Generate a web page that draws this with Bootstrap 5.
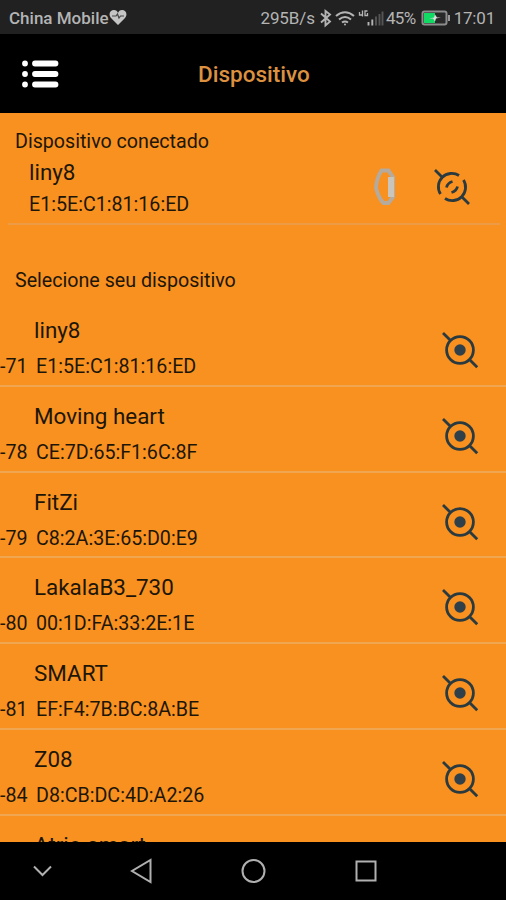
<!DOCTYPE html>
<html lang="pt">
<head>
<meta charset="utf-8">
<meta name="viewport" content="width=device-width, initial-scale=1">
<title>Dispositivo</title>
<link href="https://cdn.jsdelivr.net/npm/bootstrap@5.3.0/dist/css/bootstrap.min.css" rel="stylesheet">
<style>
body{font-family:Roboto,"Liberation Sans",sans-serif;background:#f8911f;color:#1d1608;width:506px;height:900px}
svg{display:block;flex:none}
.statusbar{height:34px;background:#212121;color:#b4b4b4;font-size:17px;line-height:34px;padding:1px 11px 0 9px}
.carrier{width:100px;font-weight:500}
.speed{letter-spacing:-.1px}
.percent{letter-spacing:-.6px}
.battery{margin:0 3px 0 5px}
.clock{letter-spacing:-.2px}
.appbar{height:79px;background:#000;color:#dc9140;padding-left:21px}
.appbar h1{font-size:22.5px;margin:2px 0 0 139px}
.sect,.addr,.rssi{font-size:19.65px;line-height:30px;white-space:nowrap}
.dev{font-size:22.4px;line-height:30px;white-space:nowrap}
.linked{height:112px;margin:0 6px 0 8px;padding:14px 0 0 7px;border-bottom:2px solid #ee9b45}
.linked .dev{margin:0 0 3px 14px}
.linked .addr{margin-left:14px}
.band{margin:41px 36px 0 0}
.unlink{margin:41px 29px 0 0}
.pick{height:76px;padding:41px 0 0 15px}
.found{height:85.75px;border-bottom:2px solid #f0a550;padding-top:14px}
.found .dev{padding-left:34px;margin-bottom:7px}
.rssi{width:36px}
.target{margin:16px 27px 0 0}
.navbtns{height:58px;background:#000}
</style>
</head>
<body class="d-flex flex-column overflow-hidden">
<svg class="d-none">
  <symbol id="aim" viewBox="0 0 38 38"><g fill="none" stroke="#2b3a3f" stroke-width="2.8"><circle cx="19" cy="19" r="13.400"/><path d="M2 2l7.800 7.800M28.200 28.200l8 8"/></g><circle cx="19" cy="19" r="5.700" fill="#2f404a"/></symbol>
</svg>
<header class="statusbar d-flex align-items-center flex-shrink-0">
  <span class="carrier">China Mobile</span>
  <svg width="18" height="17" viewBox="0 0 18 17"><path d="M9 16L2 9C-1 5 1 1 5 1q3 0 4 3 1-3 4-3c4 0 6 4 3 8z" fill="#c4c4c4"/><path d="M3 7h4l1.500-2L10 9l1.500-2H15" fill="none" stroke="#444" stroke-width="1.200"/></svg>
  <span class="ms-auto speed">295B/s</span>
  <svg width="71" height="24" viewBox="314 5.500 71 24" fill="none" stroke="#b4b4b4" stroke-width="1.900">
    <path d="M320 13l9 8-4.500 4V10.500l4.500 3.500-9 8"/>
    <path d="M335 15.500q9-7.500 18 0M338 19q6-5 12 0M341 22q3-2 6 0" stroke-width="2.100"/><circle cx="344" cy="24" r="1" fill="#b4b4b4" stroke="none"/>
    <path d="M358.500 11.500v3h3v-3M361.500 10v6M366.500 10.500h-2.500v4.500h2.500v-2.500" stroke-width="1.300"/>
    <path d="M367.500 21.500v3.500M371.300 19v6"/><path d="M375 16v9M378.500 13.500v11.500M381.500 11v14" stroke="#555"/>
  </svg>
  <span class="percent">45%</span>
  <svg class="battery" width="30" height="18" viewBox="0 0 30 18"><rect x="1.500" y="2.500" width="24" height="13" rx="2" fill="#292929" stroke="#8c8c8c" stroke-width="2"/><path d="M3 4h11v10H3z" fill="#12d963"/><path d="M8 9.500l5-1 1-3 2 3h4l-5 1-1 3-2-3z" fill="#ddd"/><path d="M28 6v6" stroke="#999" stroke-width="2"/></svg>
  <span class="clock">17:01</span>
</header>
<nav class="appbar d-flex align-items-center flex-shrink-0">
  <svg width="38" height="30" viewBox="0 0 38 30" fill="#fff" stroke="#fff" stroke-width="5.800" stroke-linecap="round"><path d="M4 4.500h.01M4 15h.01M4 25.500h.01M14 4.500h20.500M14 15h20.500M14 25.500h20.500"/></svg>
  <h1>Dispositivo</h1>
</nav>
<main class="flex-grow-1 overflow-hidden">
  <section class="linked d-flex">
    <div class="flex-grow-1"><div class="sect">Dispositivo conectado</div><div class="dev">liny8</div><div class="addr">E1:5E:C1:81:16:ED</div></div>
    <svg class="band" width="24" height="37" viewBox="0 0 24 37"><path d="M8.500 2.500h7l4.500 6.500v20l-4.500 6h-5Q6 31 3 20 3.500 10 8.500 2.500z" fill="none" stroke="#b5aa9b" stroke-width="4"/><path d="M15 9h6v20h-6z" fill="#c9c5bd"/></svg>
    <svg class="unlink" width="38" height="38" viewBox="0 0 38 38" fill="none" stroke="#2b3a3f" stroke-width="2.800"><path d="M2 2l7.500 7.500M28.500 28.500l7.500 7.500M7.500 26A13.400 13.400 0 0 1 26 7.500M30.500 12A13.400 13.400 0 0 1 12 30.500M13.500 19.500q1-4.500 6-6M18.500 24.500q5-1.500 6-6"/></svg>
  </section>
  <div class="pick sect">Selecione seu dispositivo</div>
  <div class="found d-flex"><div class="flex-grow-1"><div class="dev">liny8</div><div class="d-flex"><span class="rssi">-71</span><span class="addr">E1:5E:C1:81:16:ED</span></div></div><svg class="target" width="38" height="38"><use href="#aim"/></svg></div>
  <div class="found d-flex"><div class="flex-grow-1"><div class="dev">Moving heart</div><div class="d-flex"><span class="rssi">-78</span><span class="addr">CE:7D:65:F1:6C:8F</span></div></div><svg class="target" width="38" height="38"><use href="#aim"/></svg></div>
  <div class="found d-flex"><div class="flex-grow-1"><div class="dev">FitZi</div><div class="d-flex"><span class="rssi">-79</span><span class="addr">C8:2A:3E:65:D0:E9</span></div></div><svg class="target" width="38" height="38"><use href="#aim"/></svg></div>
  <div class="found d-flex"><div class="flex-grow-1"><div class="dev">LakalaB3_730</div><div class="d-flex"><span class="rssi">-80</span><span class="addr">00:1D:FA:33:2E:1E</span></div></div><svg class="target" width="38" height="38"><use href="#aim"/></svg></div>
  <div class="found d-flex"><div class="flex-grow-1"><div class="dev">SMART</div><div class="d-flex"><span class="rssi">-81</span><span class="addr">EF:F4:7B:BC:8A:BE</span></div></div><svg class="target" width="38" height="38"><use href="#aim"/></svg></div>
  <div class="found d-flex"><div class="flex-grow-1"><div class="dev">Z08</div><div class="d-flex"><span class="rssi">-84</span><span class="addr">D8:CB:DC:4D:A2:26</span></div></div><svg class="target" width="38" height="38"><use href="#aim"/></svg></div>
  <div class="found"><div class="dev">Atrio smart</div></div>
</main>
<footer class="navbtns flex-shrink-0">
  <svg width="506" height="58" viewBox="0 842 506 58" fill="none" stroke="#b0b0b0" stroke-width="2"><path d="M34 866.500l8.500 8.500 8.500-8.500M150.500 860v22L132 871z"/><circle cx="253.500" cy="871" r="11"/><rect x="356.500" y="861.500" width="19" height="19"/></svg>
</footer>
<script src="https://cdn.jsdelivr.net/npm/bootstrap@5.3.0/dist/js/bootstrap.bundle.min.js"></script>
</body>
</html>
